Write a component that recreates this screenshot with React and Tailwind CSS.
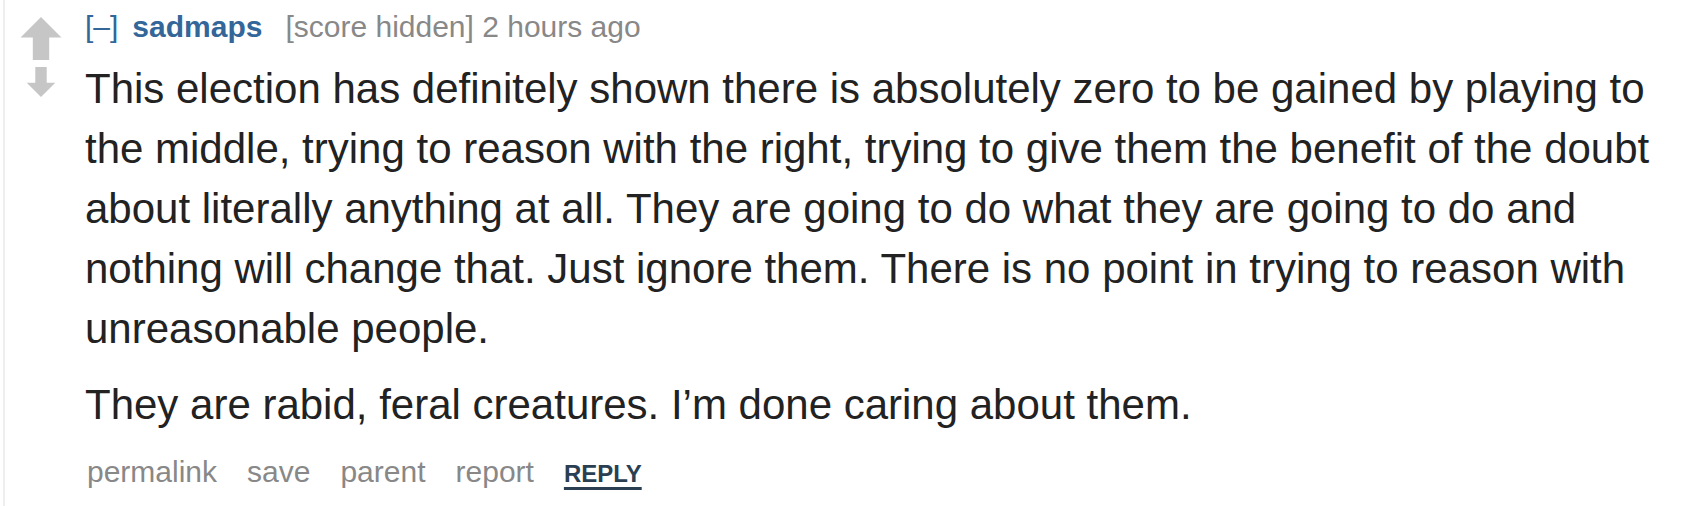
const Arrow = ({ down = false, className = '' }) => (
  <svg viewBox="0 0 40 42" className={className} style={{ transform: down ? 'scaleY(-1)' : undefined }}>
    <path d="M20 0 L40 20 L28 20 L28 42 L12 42 L12 20 L0 20 Z" fill="#c6c6c6" />
  </svg>
)

export default function App() {
  const font = { fontFamily: '"Liberation Sans", Arial, sans-serif' }
  return (
    <div className="w-[1704px] h-[506px] bg-white flex" style={font}>
      <div className="w-[2px] ml-[3px] bg-[#eeeeee]" />
      <div className="flex flex-1">
        <div className="w-[80px] flex flex-col items-center pt-[17px] pr-[8px]">
          <Arrow className="w-[44px] h-[43px]" />
          <Arrow down className="w-[30px] h-[30px] mt-[7px]" />
        </div>
        <div className="flex-1 pt-[9px] pr-[40px]">
          <div className="flex items-baseline text-[30px] leading-[36px]">
            <span className="text-[#336699]">[–]</span>
            <span className="text-[#336699] font-bold ml-[14px]">sadmaps</span>
            <span className="text-[#888888] ml-[23px]">[score hidden] 2 hours ago</span>
          </div>
          <div className="text-[42px] leading-[60px] text-[#222222] mt-[14px]">
            <p>
              This election has definitely shown there is absolutely zero to be gained by playing to the middle,
              trying to reason with the right, trying to give them the benefit of the doubt about literally anything
              at all. They are going to do what they are going to do and nothing will change that. Just ignore them.
              There is no point in trying to reason with unreasonable people.
            </p>
            <p className="mt-[16px]">They are rabid, feral creatures. I’m done caring about them.</p>
          </div>
          <div className="flex items-baseline gap-[30px] text-[30px] leading-[36px] mt-[19px] pl-[2px]">
            <span className="text-[#888888]">permalink</span>
            <span className="text-[#888888]">save</span>
            <span className="text-[#888888]">parent</span>
            <span className="text-[#888888]">report</span>
            <span className="text-[#2b3f52] font-bold text-[24px] underline underline-offset-[5px] decoration-[3px]">REPLY</span>
          </div>
        </div>
      </div>
    </div>
  )
}
